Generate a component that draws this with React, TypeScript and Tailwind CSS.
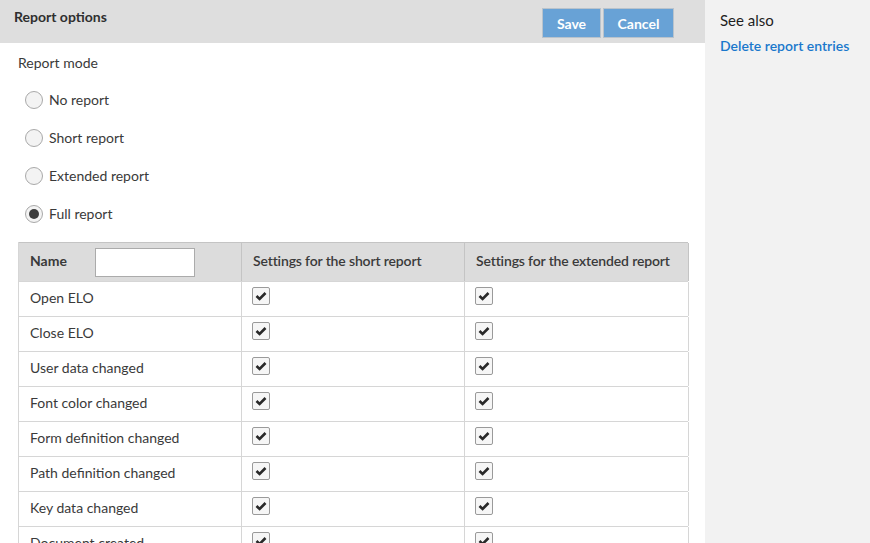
import React from "react";

const rows = [
  "Open ELO",
  "Close ELO",
  "User data changed",
  "Font color changed",
  "Form definition changed",
  "Path definition changed",
  "Key data changed",
  "Document created",
];

function Radio({ label, checked }: { label: string; checked?: boolean }) {
  return (
    <div className="flex h-[38px] items-center pl-[7px]">
      <span className="flex h-[18px] w-[18px] items-center justify-center rounded-full border border-[#a9a9a9] bg-[#f3f3f3]">
        {checked && <span className="h-[10px] w-[10px] rounded-full bg-[#3d3d3d]" />}
      </span>
      <span className="ml-[6px] pb-[2px] text-[14px] text-[#3a3a3a]">{label}</span>
    </div>
  );
}

function Check() {
  return (
    <span className="flex h-[18px] w-[18px] items-center justify-center rounded-[2px] border border-[#9a9a9a] bg-[#f6f6f6]">
      <svg width="12" height="10" viewBox="0 0 12 10">
        <path d="M1.5 5 L4.6 8 L10.5 2" fill="none" stroke="#2a2a2a" strokeWidth="2.6" />
      </svg>
    </span>
  );
}

export default function App() {
  return (
    <div
      className="flex h-[543px] w-[870px] overflow-hidden bg-white text-[#333]"
      style={{ fontFamily: "Lato, 'Open Sans', sans-serif" }}
    >
      <div className="flex w-[705px] shrink-0 flex-col">
        <div className="flex h-[43px] shrink-0 items-start justify-between bg-[#dedede] pl-[14px] pr-[31px]">
          <div className="pt-[6px] text-[14px] font-bold text-[#2f2f2f]">Report options</div>
          <div className="mt-[8px] flex gap-[2px]">
            <button className="h-[30px] w-[59px] border border-[#b9c3cc] bg-[#68a2d6] text-[14px] font-bold text-white">
              Save
            </button>
            <button className="h-[30px] w-[71px] border border-[#b9c3cc] bg-[#68a2d6] text-[14px] font-bold text-white">
              Cancel
            </button>
          </div>
        </div>
        <div className="shrink-0 px-[18px]">
          <div className="mt-[10px] h-[20px] text-[14px] leading-[20px] text-[#3a3a3a]">Report mode</div>
          <div className="mt-[8px] flex flex-col">
            <Radio label="No report" />
            <Radio label="Short report" />
            <Radio label="Extended report" />
            <Radio label="Full report" checked />
          </div>
          <div className="mt-[9px] w-[670px] border-l border-[#d6d6d6]">
            <div className="grid h-[39px] grid-cols-[223px_223px_224px] border-t border-[#c4c4c4] bg-[#dcdcdc]">
              <div className="flex items-center border-r border-[#c4c4c4] pl-[11px]">
                <span className="pb-[3px] text-[14px] font-bold text-[#3a3a3a]">Name</span>
                <input className="ml-[28px] h-[29px] w-[100px] border border-[#ababab] bg-white" />
              </div>
              <div className="flex items-center border-r border-[#c4c4c4] pb-[3px] pl-[11px] text-[14px] font-semibold tracking-[-0.15px] text-[#3a3a3a]">
                Settings for the short report
              </div>
              <div className="flex items-center border-r border-[#c4c4c4] pb-[3px] pl-[11px] text-[14px] font-semibold tracking-[-0.15px] text-[#3a3a3a]">
                Settings for the extended report
              </div>
            </div>
            {rows.map((r) => (
              <div key={r} className="grid h-[35px] grid-cols-[223px_223px_224px] border-t border-[#d6d6d6]">
                <div className="flex items-center border-r border-[#d6d6d6] pb-[4px] pl-[11px] text-[14px] text-[#3a3a3a]">
                  {r}
                </div>
                <div className="border-r border-[#d6d6d6] pl-[10px] pt-[5px]">
                  <Check />
                </div>
                <div className="border-r border-[#d6d6d6] pl-[10px] pt-[5px]">
                  <Check />
                </div>
              </div>
            ))}
          </div>
        </div>
      </div>
      <div className="flex-1 bg-[#f2f2f2] pl-[15px]">
        <div className="mt-[9px] text-[15px] text-[#1e1e1e]">See also</div>
        <div className="mt-[3px] text-[14px] font-semibold text-[#1a78cc]">Delete report entries</div>
      </div>
    </div>
  );
}
